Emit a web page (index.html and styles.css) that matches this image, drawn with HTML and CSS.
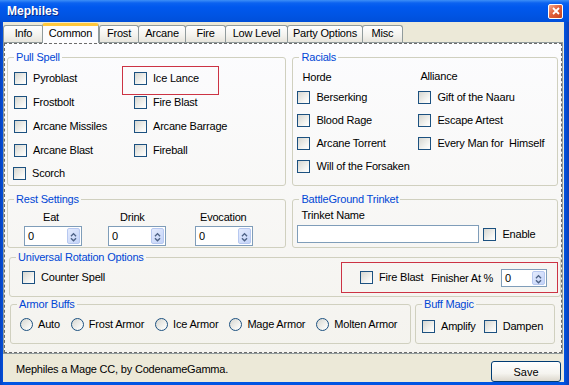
FILE: index.html
```html
<!DOCTYPE html>
<html lang="en">
<head>
  <meta charset="UTF-8" />
  <title>Mephiles</title>
  <link rel="stylesheet" href="styles.css">
</head>
<body>
  <div class="window">
    <div class="titlebar">
      <span class="title">Mephiles</span>
      <span class="close">
        <svg width="8" height="8" viewBox="0 0 8 8"><path d="M1 1L7 7M7 1L1 7" stroke="#fff" stroke-width="1.8" /></svg>
      </span>
    </div>
    <div class="client">
      <div class="tabs">
        <div class="tab tab-info">Info</div>
        <div class="tab tab-common active">Common</div>
        <div class="tab tab-frost">Frost</div>
        <div class="tab tab-arcane">Arcane</div>
        <div class="tab tab-fire">Fire</div>
        <div class="tab tab-low">Low Level</div>
        <div class="tab tab-party">Party Options</div>
        <div class="tab tab-misc">Misc</div>
      </div>

      <div class="panel">
        <div class="page">
          <div class="row row-top">
            <fieldset class="group pull">
              <legend>Pull Spell</legend>
              <div class="pull-grid">
                <label class="check"><span class="box"></span>Pyroblast</label>
                <label class="check marked"><span class="box"></span>Ice Lance</label>
                <label class="check"><span class="box"></span>Frostbolt</label>
                <label class="check"><span class="box"></span>Fire Blast</label>
                <label class="check"><span class="box"></span>Arcane Missiles</label>
                <label class="check"><span class="box"></span>Arcane Barrage</label>
                <label class="check"><span class="box"></span>Arcane Blast</label>
                <label class="check"><span class="box"></span>Fireball</label>
                <label class="check scorch"><span class="box"></span>Scorch</label>
              </div>
            </fieldset>

            <fieldset class="group racials">
              <legend>Racials</legend>
              <div class="racials-grid">
                <span class="head horde">Horde</span>
                <span class="head alliance">Alliance</span>
                <label class="check"><span class="box"></span>Berserking</label>
                <label class="check"><span class="box"></span>Gift of the Naaru</label>
                <label class="check"><span class="box"></span>Blood Rage</label>
                <label class="check"><span class="box"></span>Escape Artest</label>
                <label class="check"><span class="box"></span>Arcane Torrent</label>
                <label class="check"><span class="box"></span>Every Man for &nbsp;Himself</label>
                <label class="check"><span class="box"></span>Will of the Forsaken</label>
              </div>
            </fieldset>
          </div>

          <div class="row row-mid">
            <fieldset class="group rest">
              <legend>Rest Settings</legend>
              <div class="rest-grid">
                <span class="lbl lbl-eat">Eat</span>
                <span class="lbl lbl-drink">Drink</span>
                <span class="lbl lbl-evo">Evocation</span>
                <div class="spin"><span class="val">0</span><span class="arrows"><svg width="13" height="16" viewBox="0 0 13 16"><path d="M3.5 7L6.5 4L9.5 7M3.5 9.5L6.5 12.5L9.5 9.5" fill="none" stroke="#4d6185" stroke-width="1.6" /></svg></span></div>
                <div class="spin"><span class="val">0</span><span class="arrows"><svg width="13" height="16" viewBox="0 0 13 16"><path d="M3.5 7L6.5 4L9.5 7M3.5 9.5L6.5 12.5L9.5 9.5" fill="none" stroke="#4d6185" stroke-width="1.6" /></svg></span></div>
                <div class="spin"><span class="val">0</span><span class="arrows"><svg width="13" height="16" viewBox="0 0 13 16"><path d="M3.5 7L6.5 4L9.5 7M3.5 9.5L6.5 12.5L9.5 9.5" fill="none" stroke="#4d6185" stroke-width="1.6" /></svg></span></div>
              </div>
            </fieldset>

            <fieldset class="group trinket">
              <legend>BattleGround Trinket</legend>
              <div class="trinket-inner">
                <div class="name">Trinket Name</div>
                <div class="line">
                  <div class="textbox"></div>
                  <label class="check"><span class="box"></span>Enable</label>
                </div>
              </div>
            </fieldset>
          </div>

          <fieldset class="group universal">
            <legend>Universal Rotation Options</legend>
            <div class="universal-inner">
              <label class="check counter"><span class="box"></span>Counter Spell</label>
              <div class="redbox">
                <label class="check"><span class="box"></span><span class="fb">Fire Blast</span></label>
                <span class="finisher">Finisher At %</span>
                <div class="spin small"><span class="val">0</span><span class="arrows"><svg width="13" height="14" viewBox="0 0 13 14"><path d="M3.5 6L6.5 3L9.5 6M3.5 8.5L6.5 11.5L9.5 8.5" fill="none" stroke="#4d6185" stroke-width="1.6" /></svg></span></div>
              </div>
            </div>
          </fieldset>

          <div class="row row-bottom">
            <fieldset class="group armor">
              <legend>Armor Buffs</legend>
              <div class="radios">
                <label class="radio"><span class="dot"></span>Auto</label>
                <label class="radio"><span class="dot"></span>Frost Armor</label>
                <label class="radio"><span class="dot"></span>Ice Armor</label>
                <label class="radio"><span class="dot"></span>Mage Armor</label>
                <label class="radio"><span class="dot"></span>Molten Armor</label>
              </div>
            </fieldset>

            <fieldset class="group buff">
              <legend>Buff Magic</legend>
              <div class="buff-inner">
                <label class="check"><span class="box"></span>Amplify</label>
                <label class="check"><span class="box"></span>Dampen</label>
              </div>
            </fieldset>
          </div>
        </div>
      </div>

      <div class="footer">
        <span class="status">Mephiles a Mage CC, by CodenameGamma.</span>
        <button class="save" type="button">Save</button>
      </div>
    </div>
  </div>
</body>
</html>
```

FILE: styles.css
```css
* {
  box-sizing: border-box;
}

body {
  margin: 0;
  font-family: "Liberation Sans", Arial, sans-serif;
  font-size: 11px;
  letter-spacing: -0.2px;
  color: #000;
  background: #fff;
}

/* window frame */
.window {
  width: 569px;
  height: 385px;
  display: flex;
  flex-direction: column;
  background: linear-gradient(to right, #0842c0, #0054e3 4px, #0054e3 calc(100% - 5px), #0a3fb8);
}

.titlebar {
  height: 22px;
  flex: none;
  display: flex;
  align-items: center;
  justify-content: space-between;
  padding: 0 6px 0 7px;
  background: linear-gradient(#3d8ff7 0, #0b62f0 3px, #0058ee 7px, #0054e3 70%, #004fd9 100%);
  color: #fff;
}

.title {
  font-weight: bold;
  font-size: 12px;
  letter-spacing: 0;
  text-shadow: 1px 1px #0a2a8a;
}

.close {
  width: 15px;
  height: 15px;
  border: 1px solid #fff;
  border-radius: 2px;
  background: linear-gradient(135deg, #f2a98f, #e2603a 45%, #c5421e);
  display: flex;
  align-items: center;
  justify-content: center;
}

.client {
  flex: 1;
  margin: 0 5px 3px 3px;
  background: #ece9d8;
  display: flex;
  flex-direction: column;
}

/* tabs */
.tabs {
  height: 20px;
  flex: none;
  display: flex;
  align-items: flex-end;
  position: relative;
  z-index: 1;
}

.tab {
  height: 17px;
  border: 1px solid #919b9c;
  border-bottom: none;
  border-radius: 3px 3px 0 0;
  background: linear-gradient(#fff, #f3f2ed 60%, #e6e4dc);
  line-height: 15px;
  text-align: center;
  white-space: nowrap;
}

.tab + .tab {
  margin-left: -1px;
}

.tab.active {
  height: 20px;
  margin-left: -2px;
  margin-bottom: -1px;
  border-top: 3px solid #ffc83c;
  background: #fcfcfe;
  line-height: 15px;
  position: relative;
}

.tab.active + .tab {
  margin-left: 0;
}

.tab-info { width: 41px; }
.tab-common { width: 57px; }
.tab-frost { width: 40px; }
.tab-arcane { width: 48px; }
.tab-fire { width: 41px; }
.tab-low { width: 63px; }
.tab-party { width: 76px; }
.tab-misc { width: 41px; }

/* tab page */
.panel {
  width: 560px;
  height: 312px;
  flex: none;
  border: 1px solid #919b9c;
  background: linear-gradient(#fcfcfe, #f4f3ee);
}

.page {
  height: 100%;
  border: 1px dashed #6b6b6b;
  padding: 7px 3px 0 2px;
}

.row {
  display: flex;
}

.row-top {
  gap: 6px;
  height: 135px;
}

.row-mid {
  gap: 6px;
  height: 55px;
  margin-top: 7px;
}

.row-bottom {
  gap: 4px;
  height: 46px;
  margin: 1px 0 0 3px;
}

/* group boxes */
.group {
  margin: 0;
  padding: 0;
  min-width: 0;
  border: 1px solid #d0d0bf;
  border-radius: 3px;
}

.group legend {
  margin-left: 6px;
  padding: 0 2px;
  line-height: 13px;
  color: #0046d5;
}

.check,
.radio {
  display: flex;
  align-items: center;
  gap: 6px;
  white-space: nowrap;
  line-height: 13px;
}

.box,
.dot {
  width: 13px;
  height: 13px;
  flex: none;
  border: 1px solid #1c5180;
  background: linear-gradient(135deg, #d6d6d0, #f6f6f3 70%, #fff);
}

.dot {
  border-radius: 50%;
}

.radio {
  gap: 5px;
}

.pull {
  width: 280px;
}

.pull-grid {
  display: grid;
  grid-template-columns: 120px 1fr;
  grid-auto-rows: 23.75px;
  padding: 3px 0 0 6px;
}

.scorch {
  margin-left: -1px;
}

.marked {
  position: relative;
}

.marked::after {
  content: "";
  position: absolute;
  left: -12px;
  top: -1px;
  width: 95px;
  height: 27px;
  border: 1px solid #cc3344;
}

.racials {
  width: 266px;
}

.racials-grid {
  display: grid;
  grid-template-columns: 121px 1fr;
  grid-template-rows: 22px repeat(4, 23px);
  padding-left: 4px;
}

.head {
  padding-top: 7px;
  line-height: 13px;
}

.horde {
  padding-left: 5px;
}

.alliance {
  padding-left: 2px;
  padding-top: 6px;
}

/* rest settings */
.rest {
  width: 280px;
}

.rest-grid {
  display: grid;
  grid-template-columns: 84px 87px 58px;
  grid-template-rows: 13px 20px;
  row-gap: 2px;
  padding: 5px 0 0 16px;
}

.lbl {
  line-height: 13px;
}

.lbl-eat { padding-left: 19px; }
.lbl-drink { padding-left: 12px; }
.lbl-evo { padding-left: 5px; }

.spin {
  display: flex;
  width: 58px;
  height: 20px;
  border: 1px solid #7f9db9;
  background: #fff;
  padding: 1px;
}

.spin .val {
  flex: 1;
  padding-left: 2px;
  line-height: 16px;
}

.spin .arrows {
  width: 13px;
  display: flex;
  border: 1px solid #b7c8f0;
  border-radius: 2px;
  background: linear-gradient(135deg, #e4ebfd, #c3d3f8);
}

.spin.small {
  width: 46px;
  height: 18px;
}

.spin.small .val {
  line-height: 14px;
}

/* trinket */
.trinket {
  width: 266px;
}

.trinket-inner {
  padding: 3px 0 0 4px;
}

.trinket .name {
  padding-left: 4px;
  line-height: 13px;
}

.trinket .line {
  display: flex;
  align-items: center;
  gap: 4px;
  margin-top: 3px;
}

.textbox {
  width: 182px;
  height: 18px;
  border: 1px solid #7f9db9;
  background: #fff;
}

/* universal */
.universal {
  width: 552px;
  height: 46px;
  margin: 3px 0 0 2px;
}

.universal-inner {
  display: flex;
  justify-content: space-between;
  align-items: flex-start;
  padding: 0 2px 0 12px;
}

.counter {
  margin-top: 7px;
}

.redbox {
  width: 217px;
  height: 31px;
  margin-top: -2px;
  border: 1px solid #cc3344;
  display: flex;
  align-items: center;
  padding-left: 18px;
}

.fb {
  width: 52px;
}

.finisher {
  width: 70px;
  white-space: nowrap;
}

/* bottom row */
.armor {
  width: 401px;
}

.radios {
  display: flex;
  gap: 11px;
  padding: 7px 0 0 9px;
}

.buff {
  width: 140px;
}

.buff-inner {
  display: flex;
  gap: 8px;
  padding: 9px 0 0 6px;
}

/* footer */
.footer {
  flex: 1;
  display: flex;
  align-items: center;
  justify-content: space-between;
  padding: 0 3px 0 13px;
}

.status {
  margin-top: 2px;
}

.save {
  width: 70px;
  height: 21px;
  margin-top: 7px;
  border: 1px solid #003c74;
  border-radius: 3px;
  background: linear-gradient(#fff, #f5f4ef 60%, #dcd7cc);
  font: inherit;
  color: #000;
  padding: 0;
}
```
